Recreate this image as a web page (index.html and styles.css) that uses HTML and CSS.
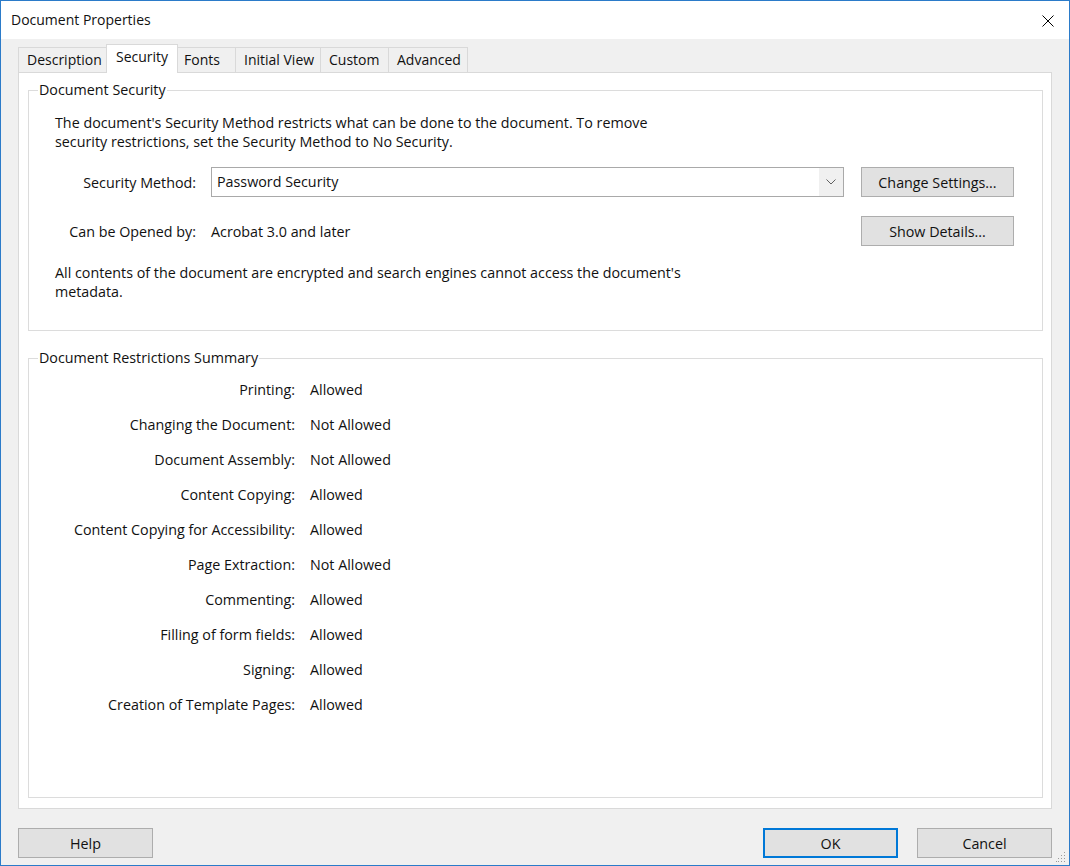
FILE: index.html
```html
<!DOCTYPE html>
<html>
<head>
<meta charset="utf-8">
<title>Document Properties</title>
<link rel="stylesheet" href="styles.css">
</head>
<body>
<div class="window">
  <div class="titlebar">
    <span class="title">Document Properties</span>
    <span class="close" aria-label="Close">
      <svg width="12" height="12" viewBox="0 0 12 12"><path d="M0.5 0.5 L11.5 11.5 M11.5 0.5 L0.5 11.5" stroke="#000" stroke-width="1" fill="none"/></svg>
    </span>
  </div>
  <div class="body">
    <div class="tabs">
      <div class="tab t-desc">Description</div>
      <div class="tab t-sec selected">Security</div>
      <div class="tab t-fonts">Fonts</div>
      <div class="tab t-iv">Initial View</div>
      <div class="tab t-cust">Custom</div>
      <div class="tab t-adv">Advanced</div>
    </div>
    <div class="panel">
      <fieldset class="group g-sec">
        <legend>Document Security</legend>
        <p class="desc">The document's Security Method restricts what can be done to the document. To remove<br>security restrictions, set the Security Method to No Security.</p>
        <div class="row row-first">
          <span class="label">Security Method:</span>
          <div class="combo">
            <span class="combo-text">Password Security</span>
            <span class="combo-arrow"><svg width="10" height="6" viewBox="0 0 10 6"><path d="M0.5 0.5 L5 5 L9.5 0.5" stroke="#606060" stroke-width="1" fill="none"/></svg></span>
          </div>
          <button class="btn btn-side">Change Settings...</button>
        </div>
        <div class="row row-second">
          <span class="label">Can be Opened by:</span>
          <span class="value">Acrobat 3.0 and later</span>
          <button class="btn btn-side">Show Details...</button>
        </div>
        <p class="desc desc-last">All contents of the document are encrypted and search engines cannot access the document's<br>metadata.</p>
      </fieldset>
      <fieldset class="group g-res">
        <legend>Document Restrictions Summary</legend>
        <div class="restrictions">
          <span class="r-label">Printing:</span><span class="r-value">Allowed</span>
          <span class="r-label">Changing the Document:</span><span class="r-value">Not Allowed</span>
          <span class="r-label">Document Assembly:</span><span class="r-value">Not Allowed</span>
          <span class="r-label">Content Copying:</span><span class="r-value">Allowed</span>
          <span class="r-label">Content Copying for Accessibility:</span><span class="r-value">Allowed</span>
          <span class="r-label">Page Extraction:</span><span class="r-value">Not Allowed</span>
          <span class="r-label">Commenting:</span><span class="r-value">Allowed</span>
          <span class="r-label">Filling of form fields:</span><span class="r-value">Allowed</span>
          <span class="r-label">Signing:</span><span class="r-value">Allowed</span>
          <span class="r-label">Creation of Template Pages:</span><span class="r-value">Allowed</span>
        </div>
      </fieldset>
    </div>
    <div class="footer">
      <button class="btn btn-foot">Help</button>
      <span class="spacer"></span>
      <button class="btn btn-foot btn-default">OK</button>
      <button class="btn btn-foot">Cancel</button>
    </div>
  </div>
  <svg class="grip" width="10" height="10" viewBox="0 0 10 10">
    <rect x="8" y="0" width="1" height="1" fill="#9a9a9a"/>
    <rect x="5" y="3" width="1" height="1" fill="#9a9a9a"/>
    <rect x="8" y="3" width="1" height="1" fill="#9a9a9a"/>
    <rect x="2" y="6" width="1" height="1" fill="#9a9a9a"/>
    <rect x="5" y="6" width="1" height="1" fill="#9a9a9a"/>
    <rect x="8" y="6" width="1" height="1" fill="#9a9a9a"/>
    <rect x="0" y="9" width="1" height="1" fill="#9a9a9a"/>
    <rect x="2" y="9" width="1" height="1" fill="#9a9a9a"/>
    <rect x="5" y="9" width="1" height="1" fill="#9a9a9a"/>
    <rect x="8" y="9" width="1" height="1" fill="#9a9a9a"/>
  </svg>
</div>
</body>
</html>
```

FILE: styles.css
```css
* { box-sizing: border-box; }
html, body { margin: 0; padding: 0; }
body {
  width: 1070px;
  height: 866px;
  font-family: "Open Sans", "Noto Sans", "Liberation Sans", sans-serif;
  font-size: 14.3px;
  color: #111;
  background: #f0f0f0;
  overflow: hidden;
}
.window {
  position: relative;
  width: 1070px;
  height: 866px;
  border: 1px solid #2b7bc9;
  display: flex;
  flex-direction: column;
  background: #f0f0f0;
}
.titlebar {
  height: 38px;
  background: #fff;
  display: flex;
  align-items: center;
  justify-content: space-between;
  padding: 0 15px 0 10px;
  flex: none;
}
.title { font-size: 14px; line-height: 20px; }
.close { display: flex; width: 12px; height: 12px; margin-top: 1px; }
.body {
  flex: 1;
  display: flex;
  flex-direction: column;
  padding: 5px 17px 7px 17px;
  min-height: 0;
}
.tabs {
  display: flex;
  align-items: flex-end;
  height: 29px;
  margin-bottom: -1px;
  position: relative;
  z-index: 1;
  flex: none;
  font-size: 14px;
}
.tab {
  height: 25px;
  margin-bottom: 1px;
  border: 1px solid #d9d9d9;
  border-bottom: none;
  border-left: none;
  background: #f0f0f0;
  padding-left: 8px;
  line-height: 23px;
  white-space: nowrap;
}
.tab.t-desc { border-left: 1px solid #d9d9d9; }
.tab.selected {
  height: 29px;
  margin-bottom: 0;
  background: #fff;
  border-left: 1px solid #d9d9d9;
  padding-left: 9px;
  line-height: 24px;
}
.t-desc { width: 89px; }
.t-sec { width: 72px; margin-left: -1px; }
.t-fonts { width: 58px; padding-left: 6px; }
.t-iv { width: 85px; }
.t-cust { width: 68px; }
.t-adv { width: 79px; }
.panel {
  flex: 1;
  background: #fff;
  border: 1px solid #d9d9d9;
  display: flex;
  flex-direction: column;
  padding: 0 8px 10px 9px;
  min-height: 0;
}
.group {
  margin: 0;
  border: 1px solid #dcdcdc;
  padding: 0;
  min-width: 0;
}
.group legend {
  margin-left: 9px;
  padding: 0 1px;
  line-height: 20px;
  font-size: 14.3px;
}
.g-sec { margin-top: 7px; padding-bottom: 29px; }
.g-res { margin-top: 17px; flex: 1; }
.desc {
  margin: 13px 0 0 0;
  padding-left: 26px;
  line-height: 19px;
  white-space: nowrap;
}
.desc-last { margin-top: 17px; }
.row {
  display: flex;
  align-items: center;
  height: 30px;
  padding-right: 28px;
}
.row-first { margin-top: 16px; }
.row-second { margin-top: 19px; }
.label {
  width: 167px;
  text-align: right;
  margin-right: 15px;
  flex: none;
}
.value { flex: 1; }
.combo {
  flex: 1;
  height: 30px;
  border: 1px solid #a9a9a9;
  display: flex;
  background: #fff;
  margin-right: 17px;
}
.combo-text {
  flex: 1;
  padding-left: 5px;
  line-height: 27px;
}
.combo-arrow {
  width: 24px;
  background: #f0f0f0;
  display: flex;
  align-items: center;
  justify-content: center;
}
.btn {
  font-family: inherit;
  font-size: 14.3px;
  color: #111;
  background: #e1e1e1;
  border: 1px solid #adadad;
  padding: 0;
  height: 30px;
  flex: none;
}
.btn-side { width: 153px; }
.restrictions {
  display: grid;
  grid-template-columns: 266px 1fr;
  grid-auto-rows: 35px;
  column-gap: 15px;
  align-items: center;
  padding-top: 4px;
}
.r-label { text-align: right; white-space: nowrap; }
.footer {
  display: flex;
  margin-top: 19px;
  gap: 19px;
  flex: none;
}
.spacer { flex: 1; }
.btn-foot { width: 135px; }
.btn-default { border: 2px solid #0078d7; }
.grip { position: absolute; right: 3px; bottom: 3px; }
```
